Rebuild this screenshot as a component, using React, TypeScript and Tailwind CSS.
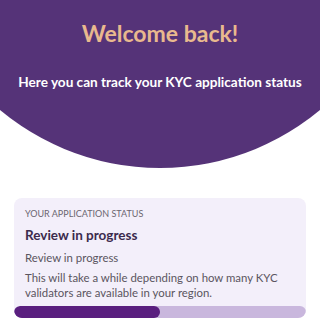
export default function App() {
  return (
    <div className="w-[320px] h-[320px] overflow-hidden bg-white font-['Lato',sans-serif]">
      <header className="h-[170px] bg-[#553378] [clip-path:circle(250px_at_50%_-82px)] flex flex-col items-center pt-[16px]">
        <h1 className="text-[23px] leading-[34px] font-bold text-[#e9b98e]">Welcome back!</h1>
        <p className="mt-[23px] text-[13.6px] leading-[18px] font-bold text-white">
          Here you can track your KYC application status
        </p>
      </header>

      <section className="mx-[14px] mt-[28px] rounded-[8px] bg-[#f3effa] overflow-hidden">
        <div className="px-[11px] pt-[10px] pb-[6px]">
          <div className="text-[9px] leading-[12px] uppercase text-[#6b6670]">Your application status</div>
          <h2 className="mt-[6px] text-[13.5px] leading-[18px] font-bold text-[#3b2b4d]">Review in progress</h2>
          <p className="mt-[6px] text-[11.4px] leading-[15px] text-[#5a5560]">Review in progress</p>
          <p className="mt-[5px] text-[11.4px] leading-[15px] text-[#5a5560]">
            This will take a while depending on how many KYC validators are available in your region.
          </p>
        </div>
        <div className="h-[12px] rounded-full bg-[#c9b7dd] overflow-hidden">
          <div className="h-full w-[50%] rounded-full bg-[#5a1f7f]" />
        </div>
      </section>
    </div>
  );
}
